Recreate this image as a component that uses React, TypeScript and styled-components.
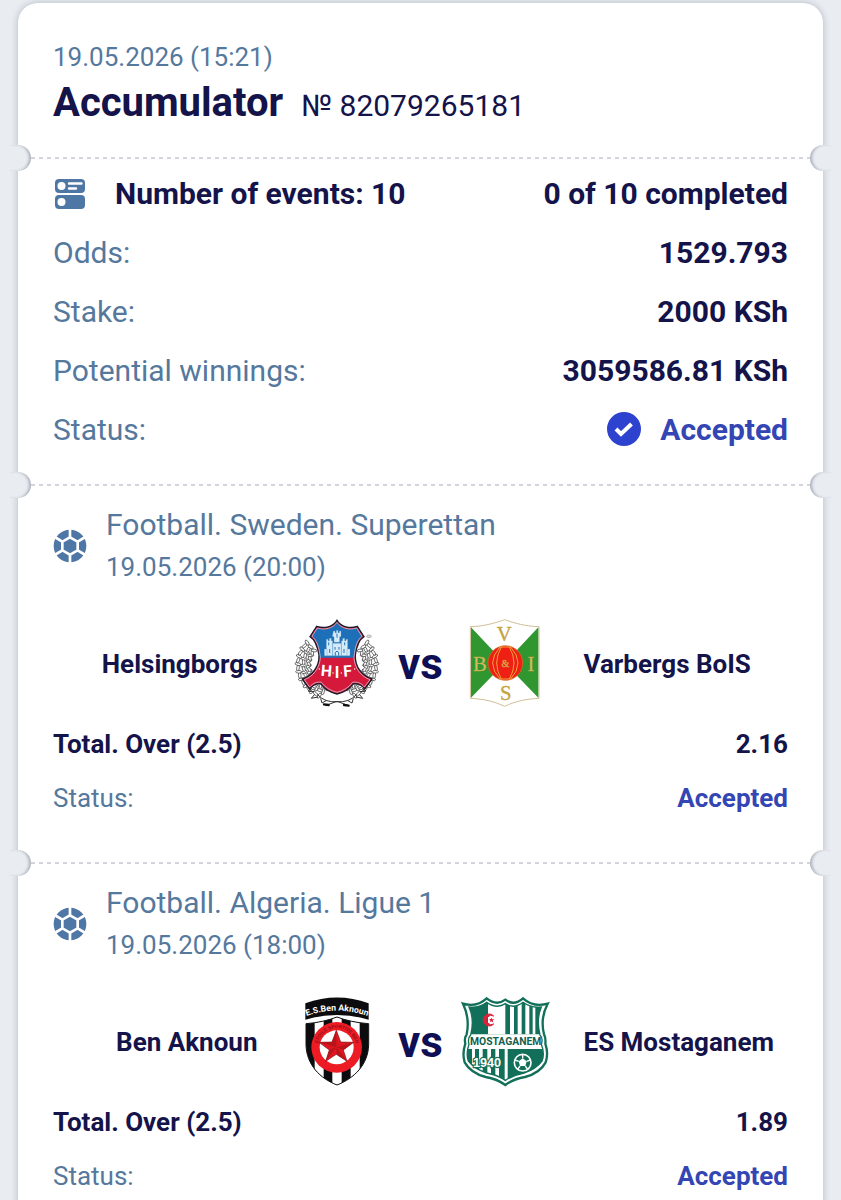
import React from 'react'
import styled, { createGlobalStyle } from 'styled-components'

const color = {
  page: '#e9edf2',
  card: '#ffffff',
  navy: '#14134a',
  steel: '#55789d',
  icon: '#4f77a6',
  accepted: '#3445b4',
  badge: '#2d42cf',
  dash: '#d3d5de',
}

const GlobalStyle = createGlobalStyle`
  * {
    box-sizing: border-box;
  }
  body {
    margin: 0;
    background: ${color.page};
    color: ${color.navy};
    font-family: Roboto, 'Liberation Sans', sans-serif;
  }
`

const Page = styled.main`
  padding: 3px 18px 0;
`

const Card = styled.article`
  background: ${color.card};
  border-radius: 20px;
  box-shadow: 0 0 7px rgba(30, 35, 60, 0.27);
`

const Header = styled.header`
  padding: 36px 35px 23px;
`

const PlacedAt = styled.time`
  display: block;
  font-size: 26px;
  line-height: 36px;
  color: ${color.steel};
`

const TitleRow = styled.div`
  display: flex;
  align-items: baseline;
  gap: 18px;
  line-height: 56px;
`

const Title = styled.h1`
  margin: 0;
  font-size: 40px;
  font-weight: 700;
`

const SlipNumber = styled.span`
  font-size: 30px;
`

const Divider = styled.div`
  position: relative;
  height: 2px;
  padding: 0 13px;
`

const Dashes = styled.div`
  height: 2px;
  background: repeating-linear-gradient(
    90deg,
    ${color.dash} 0 4px,
    transparent 4px 8px
  );
`

const Notch = styled.span<{ $side: 'left' | 'right' }>`
  position: absolute;
  top: -12px;
  ${({ $side }) => $side}: -8px;
  width: 21px;
  height: 26px;
  border-radius: ${({ $side }) =>
    $side === 'left' ? '0 13px 13px 0' : '13px 0 0 13px'};
  background: ${color.page};
  box-shadow: inset ${({ $side }) => ($side === 'left' ? '-3px' : '3px')} 0 3px -1px
    rgba(30, 35, 60, 0.3);
`

const Summary = styled.section`
  padding: 5px 35px 25px;
`

const Row = styled.div`
  display: flex;
  align-items: center;
  justify-content: space-between;
  height: 59px;
  font-size: 30px;
`

const Label = styled.span`
  color: ${color.steel};
`

const Value = styled.strong<{ $accepted?: boolean }>`
  display: flex;
  align-items: center;
  gap: 18px;
  font-weight: 700;
  color: ${({ $accepted }) => ($accepted ? color.accepted : color.navy)};
`

const EventsLabel = styled(Value)`
  gap: 28px;
`

const Event = styled.section`
  padding: 18px 35px 37px;
`

const EventHeader = styled.div`
  display: flex;
  align-items: center;
  gap: 19px;
  line-height: 42px;
  color: ${color.steel};
`

const League = styled.h2`
  margin: 0;
  font-size: 30px;
  font-weight: 400;
`

const StartsAt = styled.time`
  display: block;
  font-size: 26px;
`

const Match = styled.div`
  display: grid;
  grid-template-columns: 1fr auto 1fr;
  align-items: center;
  gap: 34px;
  margin: 30px 0 7px;
`

const Team = styled.span<{ $home?: boolean }>`
  font-size: 26px;
  font-weight: 700;
  text-align: ${({ $home }) => ($home ? 'right' : 'left')};
`

const Crests = styled.div`
  display: flex;
  align-items: center;
`

const Crest = styled.svg`
  display: block;
  width: 90px;
  height: 92px;
`

const Versus = styled.span`
  width: 78px;
  text-align: center;
  font-size: 44px;
  font-weight: 700;
  line-height: 52px;
  color: #0e0f55;
`

const BetRow = styled(Row)`
  height: 54px;
  font-size: 26px;
`

const EventsIcon = () => (
  <svg width="34" height="32" viewBox="0 0 34 32" aria-hidden="true">
    <rect x="2" y="1" width="30" height="14" rx="4" fill={color.icon} />
    <rect x="2" y="17" width="30" height="14" rx="4" fill={color.icon} />
    <circle cx="8.500" cy="8" r="4" fill="#fff" />
    <circle cx="8.500" cy="24" r="4" fill="#fff" />
    <path
      d="M16 5.500h12.500M16 10.500h7"
      stroke="#fff"
      strokeWidth="2.400"
      strokeLinecap="round"
    />
  </svg>
)

const BallIcon = () => (
  <svg width="34" height="34" viewBox="-51 -51 102 102" aria-hidden="true">
    <circle r="49" fill={color.icon} />
    <g fill="none" stroke="#fff" strokeWidth="8">
      <path d="M0-26 23-13V13L0 26-23 13V-13Z" />
      <path d="M0-26V-52M23-13 46-27M23 13 46 27M0 26V52M-23 13-46 27M-23-13-46-27" />
    </g>
  </svg>
)

const CheckBadge = () => (
  <svg width="36" height="36" viewBox="0 0 36 36" aria-hidden="true">
    <circle cx="18" cy="17" r="17" fill={color.badge} />
    <path
      d="M10 17l5 5L25.500 12"
      fill="none"
      stroke="#fff"
      strokeWidth="4"
    />
  </svg>
)

// leaves of the laurel, laid along the left half of an ellipse
const leaves = Array.from({ length: 17 }).flatMap((_, i) => {
  const angle = ((112 + i * 6.5) * Math.PI) / 180
  return [70, 83, 97].map((r, j) => ({
    x: 170 + r * 1.2 * Math.cos(angle + j * 0.04),
    y: 180 + r * 1.06 * Math.sin(angle + j * 0.04),
    turn: (i % 2 ? 55 : -35) + 112 + i * 7 + j * 24,
  }))
})

const Laurel = () => (
  <g fill="#fff" stroke="#333" strokeWidth="2">
    {leaves.map((leaf, i) => (
      <ellipse
        key={i}
        rx="9"
        ry="4"
        transform={`translate(${leaf.x} ${leaf.y}) rotate(${leaf.turn})`}
      />
    ))}
    <path
      d="M112 268q22 26 62 22l32 12M96 250l-12 8 18 2M104 268l-10 12 20-4M122 280l4 14 14-8"
      fill="none"
      strokeWidth="3"
    />
  </g>
)

const HelsingborgsCrest = () => (
  <Crest viewBox="36 39 270 276" role="img" aria-label="Helsingborgs">
    <Laurel />
    <g transform="translate(342 0) scale(-1 1)">
      <Laurel />
    </g>
    <path
      d="M132 298l14 2M192 300l14 2"
      stroke="#111"
      strokeWidth="7"
      strokeLinecap="round"
    />
    <path
      d="M171 46C160 66 132 72 110 64L90 95C106 104 112 122 117 150C119 186 96 212 67 222L88 252C98 240 110 235 122 236C132 250 148 262 171 267C194 262 210 250 220 236C232 235 246 240 254 252L276 222C246 212 224 186 226 150C230 122 236 104 252 95L232 64C210 72 182 66 171 46Z"
      fill="#d5193b"
      stroke="#1b1b2c"
      strokeWidth="4"
    />
    <path
      d="M171 53C158 72 132 77 112 70L97 94C112 106 117 126 121 158H222C225 126 231 106 245 94L230 70C210 77 184 72 171 53Z"
      fill="#1d70b7"
    />
    <path
      d="M171 52C158 71 132 76 112 69L96 94C111 106 117 126 121 157C120 190 98 215 73 224L89 246C100 233 112 230 124 232C136 248 152 257 171 262C190 257 206 248 218 232C230 230 244 233 253 246L270 224C244 215 223 190 222 157C225 126 231 106 246 94L230 69C210 76 184 71 171 52Z"
      fill="none"
      stroke="#dfe3ee"
      strokeWidth="2"
    />
    <g fill="#d6eaf8" stroke="#4b92cb" strokeWidth="1">
      <path d="M160 78h5v5h4v-7h5v7h4v-5h5v17h-4v17h-17V95h-5Z" />
      <path d="M139 103h5v4h4v-7h6v7h4v45h-19ZM184 107h4v-7h6v7h4v-4h5v49h-19Z" />
      <path d="M158 115h26v37h-26ZM133 132h8v20h-8ZM201 132h9v20h-9Z" />
    </g>
    <path
      d="M146 112v9M194 112v9M171 86v12M165 126v8M177 126v8M149 132v12M192 132v12M166 152v-10q5-7 10 0v10M129 155h84"
      fill="none"
      stroke="#2676b7"
      strokeWidth="3"
    />
    <g
      fill="#fff"
      fontFamily="Roboto"
      fontWeight="700"
      fontSize="47"
      textAnchor="middle"
    >
      <text x="138" y="214" transform="rotate(5 138 214)">
        H
      </text>
      <text x="171" y="220">
        I
      </text>
      <text x="204" y="214" transform="rotate(-5 204 214)">
        F
      </text>
    </g>
    <g fill="#fff">
      <circle cx="118" cy="192" r="2" />
      <circle cx="159" cy="204" r="2" />
      <circle cx="184" cy="204" r="2" />
      <circle cx="224" cy="192" r="2" />
    </g>
    <ellipse
      cx="267"
      cy="94"
      rx="7"
      ry="4"
      fill="#ddd"
      stroke="#999"
      strokeWidth="2"
    />
  </Crest>
)

const VarbergsCrest = () => (
  <Crest viewBox="540 39 270 276" role="img" aria-label="Varbergs BoIS">
    <path
      d="M571 65C613 64 645 54 674 44C703 54 735 64 777 65V280C735 282 703 290 674 304C645 290 613 282 571 280Z"
      fill="#fff"
      stroke="#d0c096"
      strokeWidth="3"
    />
    <path d="M573 67 674 174 573 278ZM775 67 674 174 775 278Z" fill="#2f9630" />
    <circle
      cx="676"
      cy="174"
      r="52"
      fill="#ef1f14"
      stroke="#d36f28"
      strokeWidth="2"
    />
    <g fill="none" stroke="#eda43a" strokeWidth="3">
      <path d="M658 126h36M658 222h36" />
      <path d="M660 126Q616 174 660 222M664 126Q636 174 664 222M688 126Q716 174 688 222M692 126Q736 174 692 222" />
    </g>
    <g
      fill="#c4a343"
      stroke="#c4a343"
      strokeWidth="1"
      fontFamily="Liberation Serif"
      fontSize="62"
      textAnchor="middle"
    >
      <text x="673" y="109">
        V
      </text>
      <text x="600" y="197" fill="#d3bf62">
        B
      </text>
      <text x="753" y="197" fill="#d3bf62">
        I
      </text>
      <text x="677" y="284">
        S
      </text>
      <text x="676" y="185" fontSize="30" fill="#f0b84a">
        &amp;
      </text>
    </g>
  </Crest>
)

const BenAknounCrest = () => (
  <Crest viewBox="36 33 270 276" role="img" aria-label="Ben Aknoun">
    <defs>
      <clipPath id="aknoun-shield">
        <path d="M78 116Q130 112 171 96Q212 112 266 116V180C264 240 222 280 171 300C120 280 80 240 78 180Z" />
      </clipPath>
      <path id="aknoun-name" d="M77 94Q171 60 265 94" />
      <path id="aknoun-ring" d="M112 187A58 58 0 1 1 228 187" />
    </defs>
    <g clipPath="url(#aknoun-shield)">
      <path d="M70 90h210v220H70Z" fill="#0c0c0e" />
      <path
        d="M104 90h27v220h-27ZM157 90h28v220h-28ZM212 90h27v220h-27Z"
        fill="#fff"
      />
    </g>
    <path
      d="M78 116Q130 112 171 96Q212 112 266 116V180C264 240 222 280 171 300C120 280 80 240 78 180Z"
      fill="none"
      stroke="#141416"
      strokeWidth="3"
    />
    <path d="M76 55Q171 20 266 55V104Q171 76 76 104Z" fill="#0c0c0e" />
    <text
      fill="#fff"
      fontFamily="Roboto"
      fontWeight="700"
      fontSize="26"
      textAnchor="middle"
    >
      <textPath href="#aknoun-name" startOffset="50%">
        E.S.Ben Aknoun
      </textPath>
    </text>
    <circle cx="170" cy="187" r="76" fill="#ec1b24" />
    <circle cx="170" cy="187" r="51" fill="#fff" />
    <text
      fill="#8f1218"
      fontFamily="Liberation Sans"
      fontWeight="700"
      fontSize="14"
      textAnchor="middle"
    >
      <textPath href="#aknoun-ring" startOffset="50%">
        ETOILE SPORTIVE BEN
      </textPath>
    </text>
    <path
      d="M169 136 182 171 221 172 190 195 201 229 169 208 137 229 148 195 117 172 156 171Z"
      fill="#e0151f"
      stroke="#7c1518"
      strokeWidth="2"
    />
    <path
      d="M169 136V187L156 171ZM221 172 169 187 190 195ZM201 229 169 187V208ZM137 229 169 187 148 195ZM117 172 169 187 156 171Z"
      fill="#b8141b"
    />
  </Crest>
)

const shieldPath =
  'M549 56Q590 68 620 40Q650 64 676 44Q702 64 729 40Q760 68 803 56Q780 100 792 148Q798 160 796 176Q806 206 797 232Q780 264 735 276Q700 282 676 300Q652 282 617 276Q572 264 554 232Q546 206 556 176Q552 160 560 148Q570 100 549 56Z'
const innerShieldPath =
  'M567 66Q598 70 620 52Q650 73 676 56Q702 73 729 52Q754 70 784 66Q768 104 780 150Q790 160 784 178Q795 206 786 228Q768 252 732 264Q700 270 676 286Q652 270 620 264Q584 252 565 228Q557 206 567 178Q562 160 572 150Q584 104 567 66Z'

const MostaganemCrest = () => (
  <Crest viewBox="540 33 270 276" role="img" aria-label="ES Mostaganem">
    <defs>
      <clipPath id="mostaganem-inner">
        <path d={innerShieldPath} />
      </clipPath>
    </defs>
    <path d={shieldPath} fill="#fff" stroke="#12705a" strokeWidth="7" />
    <g clipPath="url(#mostaganem-inner)">
      <path d="M550 40h260v270H550Z" fill="#12705a" />
      <path
        d="M624 40h52v108h-52ZM690 40h12v108h-12ZM713 40h12v108h-12ZM736 40h12v108h-12ZM758 40h8v108h-8Z"
        fill="#fff"
      />
      <path d="M550 148h260v44H550Z" fill="#fff" />
      <path
        d="M576 192h9v110h-9ZM597 192h11v110h-11ZM622 192h11v110h-11ZM646 192h11v110h-11ZM674 192h9v110h-9Z"
        fill="#fff"
      />
    </g>
    <path
      d={innerShieldPath}
      fill="none"
      stroke="#12705a"
      strokeWidth="4"
    />
    <path
      d="M641 93A18 18 0 1 0 641 117A14 14 0 1 1 641 93Z"
      fill="#d9233f"
      stroke="#d9233f"
      strokeWidth="3"
    />
    <path
      d="M634 98 637 103 643 103 638 107 640 113 634 109 629 112 631 106 627 102 632 102Z"
      fill="#d9233f"
    />
    <text
      x="677"
      y="181"
      fill="#12604e"
      fontFamily="Roboto"
      fontWeight="700"
      fontSize="31"
      textAnchor="middle"
    >
      MOSTAGANEM
    </text>
    <text
      x="621"
      y="247"
      fill="#fff"
      stroke="#12705a"
      strokeWidth="7"
      paintOrder="stroke"
      fontFamily="Liberation Sans"
      fontWeight="700"
      fontSize="38"
      textAnchor="middle"
    >
      1940
    </text>
    <circle
      cx="728"
      cy="233"
      r="25"
      fill="#12705a"
      stroke="#fff"
      strokeWidth="5"
    />
    <path
      d="M728 220 740 229 736 243H720L716 229Z"
      fill="#fff"
    />
    <path
      d="M728 220V209M740 229 751 225M736 243 743 253M720 243 713 253M716 229 705 225"
      fill="none"
      stroke="#fff"
      strokeWidth="4"
    />
  </Crest>
)

const events = [
  {
    league: 'Football. Sweden. Superettan',
    startsAt: '19.05.2026 (20:00)',
    home: 'Helsingborgs',
    away: 'Varbergs BoIS',
    homeCrest: <HelsingborgsCrest />,
    awayCrest: <VarbergsCrest />,
    odds: '2.16',
  },
  {
    league: 'Football. Algeria. Ligue 1',
    startsAt: '19.05.2026 (18:00)',
    home: 'Ben Aknoun',
    away: 'ES Mostaganem',
    homeCrest: <BenAknounCrest />,
    awayCrest: <MostaganemCrest />,
    odds: '1.89',
  },
]

const totals = [
  { label: 'Odds:', value: '1529.793' },
  { label: 'Stake:', value: '2000 KSh' },
  { label: 'Potential winnings:', value: '3059586.81 KSh' },
]

const Perforation = () => (
  <Divider>
    <Notch $side="left" />
    <Dashes />
    <Notch $side="right" />
  </Divider>
)

const App = () => {
  return (
    <>
      <GlobalStyle />
      <Page>
        <Card>
          <Header>
            <PlacedAt>19.05.2026 (15:21)</PlacedAt>
            <TitleRow>
              <Title>Accumulator</Title>
              <SlipNumber>№ 82079265181</SlipNumber>
            </TitleRow>
          </Header>
          <Perforation />
          <Summary>
            <Row>
              <EventsLabel>
                <EventsIcon />
                Number of events: 10
              </EventsLabel>
              <Value>0 of 10 completed</Value>
            </Row>
            {totals.map(({ label, value }) => (
              <Row key={label}>
                <Label>{label}</Label>
                <Value>{value}</Value>
              </Row>
            ))}
            <Row>
              <Label>Status:</Label>
              <Value $accepted>
                <CheckBadge />
                Accepted
              </Value>
            </Row>
          </Summary>
          {events.map((event) => (
            <React.Fragment key={event.league}>
              <Perforation />
              <Event>
                <EventHeader>
                  <BallIcon />
                  <div>
                    <League>{event.league}</League>
                    <StartsAt>{event.startsAt}</StartsAt>
                  </div>
                </EventHeader>
                <Match>
                  <Team $home>{event.home}</Team>
                  <Crests>
                    {event.homeCrest}
                    <Versus>vs</Versus>
                    {event.awayCrest}
                  </Crests>
                  <Team>{event.away}</Team>
                </Match>
                <BetRow>
                  <Value>Total. Over (2.5)</Value>
                  <Value>{event.odds}</Value>
                </BetRow>
                <BetRow>
                  <Label>Status:</Label>
                  <Value $accepted>Accepted</Value>
                </BetRow>
              </Event>
            </React.Fragment>
          ))}
        </Card>
      </Page>
    </>
  )
}

export default App
